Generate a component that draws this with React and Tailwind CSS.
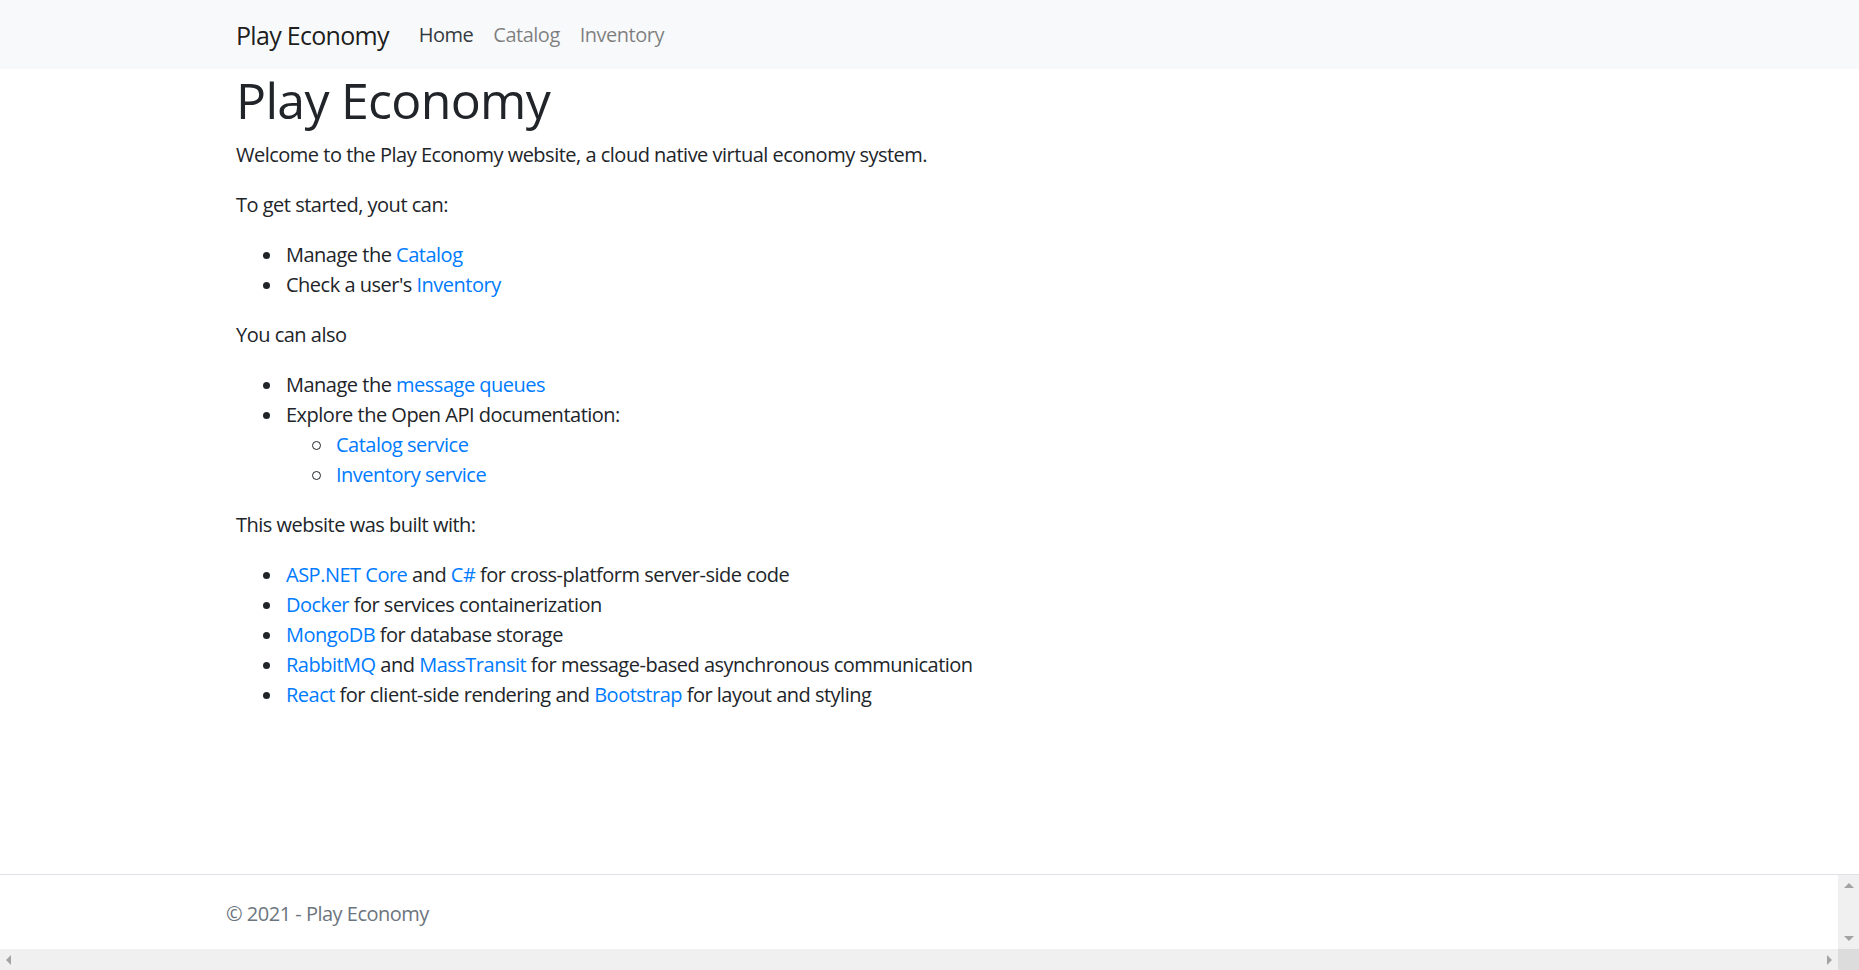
import React from 'react';

const FONT = { fontFamily: '"Open Sans", "Noto Sans", "Liberation Sans", sans-serif' };

function A({ children }) {
  return <a href="#" className="text-[#007bff] no-underline">{children}</a>;
}

function Dot() {
  return (
    <span className="w-[50px] shrink-0 -ml-[50px] flex justify-end pr-[16px] items-center h-[30px]">
      <span className="w-[7px] h-[7px] rounded-full bg-[#212529]" />
    </span>
  );
}

function Bullet({ children }) {
  return (
    <li className="flex">
      <Dot />
      <span>{children}</span>
    </li>
  );
}

function Circle({ children }) {
  return (
    <li className="flex">
      <span className="w-[50px] shrink-0 -ml-[50px] flex justify-end pr-[15px] items-center h-[30px]">
        <span className="w-[9px] h-[9px] rounded-full border border-[#212529]" />
      </span>
      <span>{children}</span>
    </li>
  );
}

export default function App() {
  return (
    <div style={FONT} className="h-[970px] w-full flex flex-col bg-white text-[#212529] text-[20px] leading-[30px] tracking-[-0.5px] overflow-hidden">
      {/* Navbar */}
      <nav className="h-[69px] bg-[#f8f9fa] shrink-0 flex items-center pl-[236px]">
        <a href="#" className="text-[25px] tracking-[-0.7px] text-black/90 mr-[20px]">Play Economy</a>
        <div className="flex items-center">
          <a href="#" className="px-[10px] text-[#343a40]">Home</a>
          <a href="#" className="px-[10px] text-black/50">Catalog</a>
          <a href="#" className="px-[10px] text-black/50">Inventory</a>
        </div>
      </nav>

      {/* Main */}
      <main className="flex-1 pl-[236px] pt-[1px]">
        <h1 className="text-[50px] leading-[60px] font-medium tracking-[-0.7px] mb-[10px]">Play Economy</h1>
        <p className="mb-[20px]">Welcome to the Play Economy website, a cloud native virtual economy system.</p>
        <p className="mb-[20px]">To get started, yout can:</p>
        <ul className="pl-[50px] mb-[20px]">
          <Bullet>Manage the <A>Catalog</A></Bullet>
          <Bullet>Check a user's <A>Inventory</A></Bullet>
        </ul>
        <p className="mb-[20px]">You can also</p>
        <ul className="pl-[50px] mb-[20px]">
          <Bullet>Manage the <A>message queues</A></Bullet>
          <li className="flex flex-col">
            <div className="flex">
              <Dot />
              <span>Explore the Open API documentation:</span>
            </div>
            <ul className="pl-[50px]">
              <Circle><A>Catalog service</A></Circle>
              <Circle><A>Inventory service</A></Circle>
            </ul>
          </li>
        </ul>
        <p className="mb-[20px]">This website was built with:</p>
        <ul className="pl-[50px]">
          <Bullet><A>ASP.NET Core</A> and <A>C#</A> for cross-platform server-side code</Bullet>
          <Bullet><A>Docker</A> for services containerization</Bullet>
          <Bullet><A>MongoDB</A> for database storage</Bullet>
          <Bullet><A>RabbitMQ</A> and <A>MassTransit</A> for message-based asynchronous communication</Bullet>
          <Bullet><A>React</A> for client-side rendering and <A>Bootstrap</A> for layout and styling</Bullet>
        </ul>
      </main>

      {/* Footer */}
      <footer className="h-[75px] shrink-0 border-t border-[#dee2e6] flex">
        <div className="flex-1 flex items-center pl-[226px] pt-[4px] text-[#6c757d]">© 2021 - Play Economy</div>
        <div className="w-[21px] bg-[#f0f0f0] flex flex-col items-center justify-between py-[8px]">
          <span className="w-0 h-0 border-l-[5px] border-r-[5px] border-b-[5px] border-l-transparent border-r-transparent border-b-[#a3a3a3]" />
          <span className="w-0 h-0 border-l-[5px] border-r-[5px] border-t-[5px] border-l-transparent border-r-transparent border-t-[#a3a3a3]" />
        </div>
      </footer>

      {/* Horizontal scrollbar */}
      <div className="h-[21px] shrink-0 flex bg-[#f0f0f0]">
        <div className="flex-1 flex items-center justify-between px-[6px]">
          <span className="w-0 h-0 border-t-[5px] border-b-[5px] border-r-[5px] border-t-transparent border-b-transparent border-r-[#a3a3a3]" />
          <span className="w-0 h-0 border-t-[5px] border-b-[5px] border-l-[5px] border-t-transparent border-b-transparent border-l-[#a3a3a3]" />
        </div>
        <div className="w-[21px] bg-[#dcdcdc]" />
      </div>
    </div>
  );
}
